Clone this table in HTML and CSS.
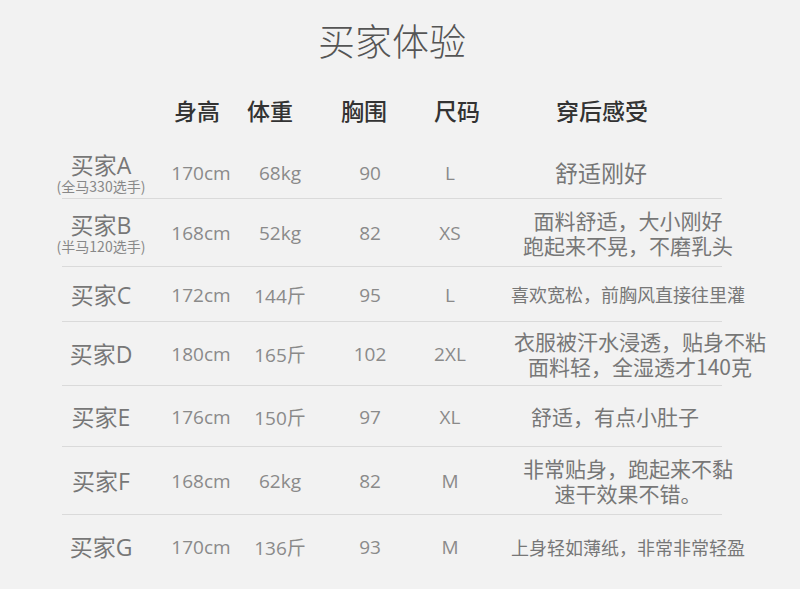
FILE: index.html
```html
<!DOCTYPE html>
<html lang="zh-CN">
<head>
<meta charset="utf-8">
<title>买家体验</title>
<link rel="stylesheet" href="styles.css">
</head>
<body>
<h1 class="title">买家体验</h1>
<div class="head">
  <span></span>
  <span>身高</span>
  <span>体重</span>
  <span>胸围</span>
  <span>尺码</span>
  <span>穿后感受</span>
</div>
<div class="table">
  <div class="row">
    <div class="name"><div>买家A</div><div class="sub">(全马330选手)</div></div>
    <div class="val">170cm</div>
    <div class="val">68kg</div>
    <div class="val">90</div>
    <div class="val">L</div>
    <div class="feel feel-a">舒适刚好</div>
  </div>
  <div class="row">
    <div class="name"><div>买家B</div><div class="sub">(半马120选手)</div></div>
    <div class="val">168cm</div>
    <div class="val">52kg</div>
    <div class="val">82</div>
    <div class="val">XS</div>
    <div class="feel"><div>面料舒适，大小刚好</div><div>跑起来不晃，不磨乳头</div></div>
  </div>
  <div class="row">
    <div class="name">买家C</div>
    <div class="val">172cm</div>
    <div class="val">144斤</div>
    <div class="val">95</div>
    <div class="val">L</div>
    <div class="feel small">喜欢宽松，前胸风直接往里灌</div>
  </div>
  <div class="row">
    <div class="name">买家D</div>
    <div class="val">180cm</div>
    <div class="val">165斤</div>
    <div class="val">102</div>
    <div class="val">2XL</div>
    <div class="feel feel-d"><div>衣服被汗水浸透，贴身不粘</div><div>面料轻，全湿透才140克</div></div>
  </div>
  <div class="row">
    <div class="name">买家E</div>
    <div class="val">176cm</div>
    <div class="val">150斤</div>
    <div class="val">97</div>
    <div class="val">XL</div>
    <div class="feel feel-e">舒适，有点小肚子</div>
  </div>
  <div class="row">
    <div class="name">买家F</div>
    <div class="val">168cm</div>
    <div class="val">62kg</div>
    <div class="val">82</div>
    <div class="val">M</div>
    <div class="feel"><div>非常贴身，跑起来不黏</div><div>速干效果不错。</div></div>
  </div>
  <div class="row last">
    <div class="name">买家G</div>
    <div class="val">170cm</div>
    <div class="val">136斤</div>
    <div class="val">93</div>
    <div class="val">M</div>
    <div class="feel small">上身轻如薄纸，非常非常轻盈</div>
  </div>
</div>
</body>
</html>
```
FILE: styles.css
```css
html, body {
  margin: 0;
  padding: 0;
  background: #f2f2f2;
}
body {
  width: 800px;
  height: 589px;
  overflow: hidden;
  font-family: "Open Sans", "Noto Sans CJK SC", sans-serif;
  color: #7a7a7a;
}
.title {
  margin: 0;
  padding: 18px 16px 0 0;
  font-family: "Noto Sans CJK SC", sans-serif;
  font-size: 37px;
  line-height: 44px;
  font-weight: 300;
  color: #555;
  text-align: center;
}
.head {
  display: grid;
  grid-template-columns: 98px 94px 52px 136px 50px 240px;
  justify-items: center;
  margin: 33px 0 21px 52px;
  font-family: "Noto Sans CJK SC", sans-serif;
  font-size: 23px;
  line-height: 30px;
  font-weight: 500;
  color: #333;
  white-space: nowrap;
}
.table {
  display: grid;
  grid-template-rows: 53px 68px 55px 64px 61px 68px 64px;
  margin-left: 52px;
  width: 736px;
}
.row {
  display: grid;
  grid-template-columns: 98px 102px 56px 124px 36px 320px;
  justify-items: center;
  align-items: center;
  white-space: nowrap;
  background: linear-gradient(#dadada, #dadada) 10px 100% / 660px 1px no-repeat;
}
.row.last {
  background: none;
}
.name {
  font-size: 23px;
  line-height: 26px;
  text-align: center;
  color: #777;
}
.sub {
  font-family: "Noto Sans CJK SC", sans-serif;
  font-size: 14px;
  line-height: 16px;
  color: #888;
}
.val {
  font-size: 19px;
  font-weight: 400;
  color: #8a8a8a;
}
.feel {
  font-family: "Noto Sans CJK SC", sans-serif;
  font-size: 21px;
  line-height: 25px;
  text-align: center;
  color: #777;
}
.feel.small {
  font-size: 18px;
}
.feel-a {
  font-size: 23px;
  margin-right: 54px;
}
.feel-d {
  margin-left: 24px;
}
.feel-e {
  margin-right: 26px;
}
```
